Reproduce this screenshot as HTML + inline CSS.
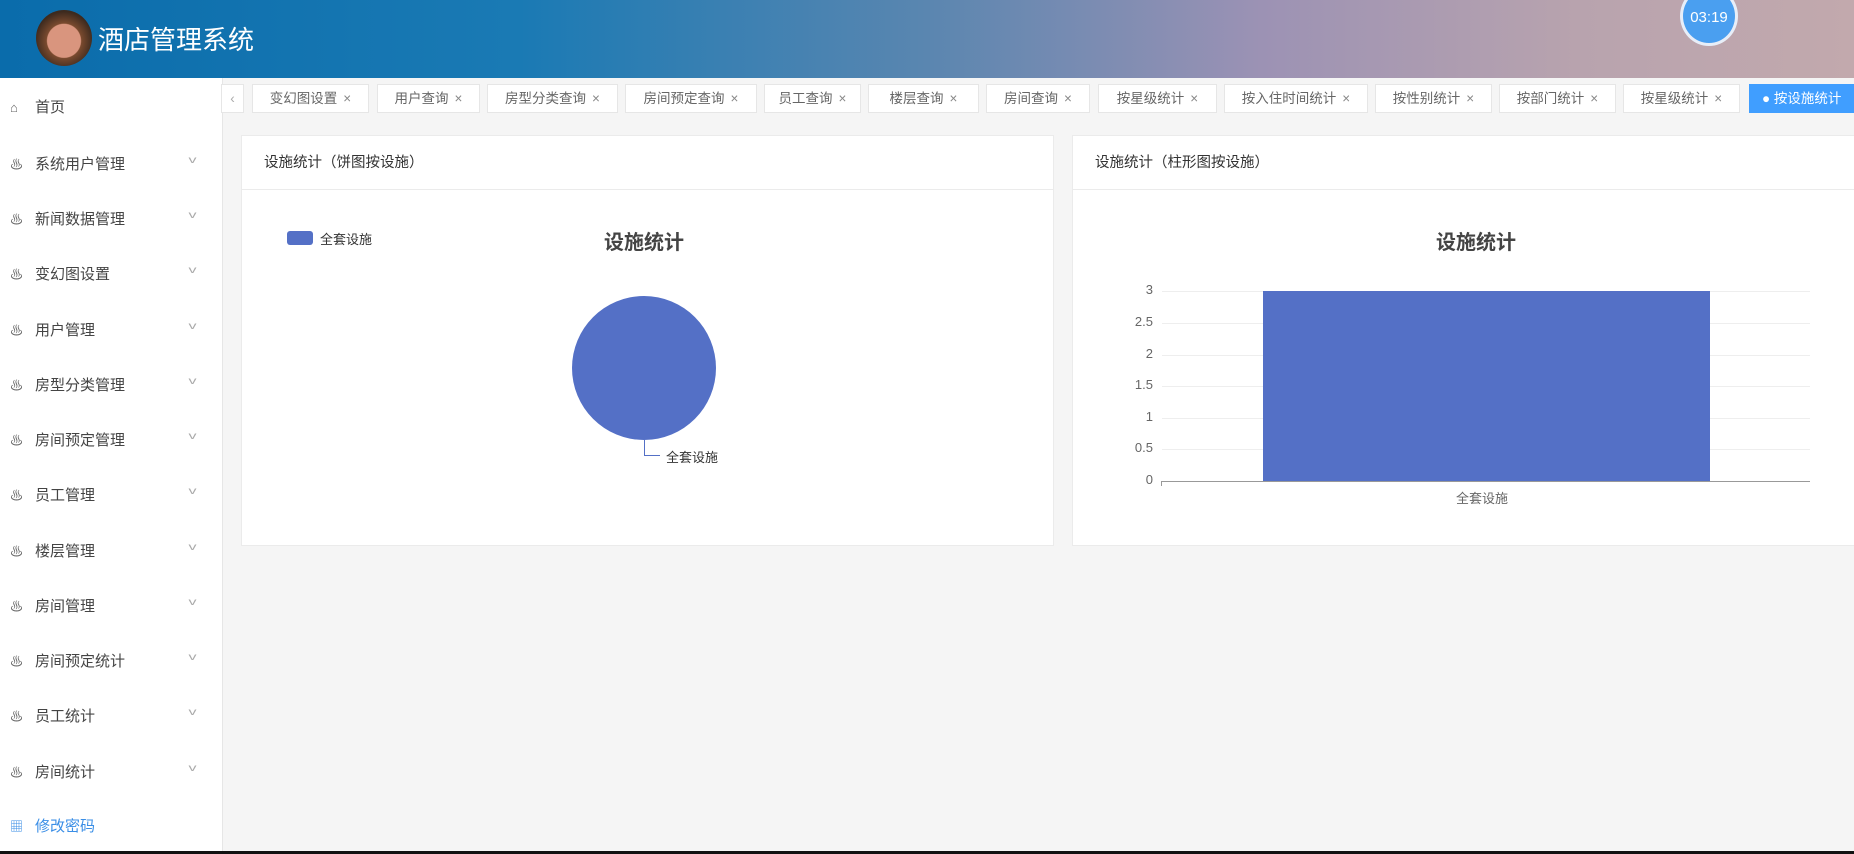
<!DOCTYPE html>
<html><head><meta charset="utf-8"><style>
*{margin:0;padding:0;box-sizing:border-box}
body{width:1854px;height:854px;overflow:hidden;background:#f5f5f5;font-family:"Liberation Sans","Noto Sans CJK SC",sans-serif;position:relative;color:#333}
.hdr{position:absolute;left:0;top:0;width:1854px;height:78px;background:linear-gradient(90deg,#0a6cab 0%,#1a7ab4 28%,#5a86b0 50%,#9c92b4 68%,#b8a3ae 85%,#c2a9ad 100%)}
.logo{position:absolute;left:36px;top:10px;width:56px;height:56px;border-radius:50%;background:radial-gradient(circle at 50% 55%,#d9957e 0 40%,#7a4a2e 42%,#3d2a1e 70%)}
.title{position:absolute;left:98px;top:20px;font-size:26px;color:#fff}
.clock{position:absolute;left:1680px;top:-14px;width:58px;height:60px;border-radius:50%;background:#4a9ff0;border:3px solid #e8eef8;color:#fff;font-size:15px;text-align:center;padding-top:20px}
.side{position:absolute;left:0;top:78px;width:223px;height:773px;background:#fff;border-right:1px solid #e6e6e6}
.mi{position:absolute;left:10px;font-size:15px;color:#444;height:20px;line-height:20px}
.mi i{display:inline-block;width:14px;font-style:normal;color:#666;margin-right:11px;font-size:13px}
.mi .ar{position:absolute;left:180px;top:-4px;color:#aaa;font-size:10px;transform:scaleX(1.6)}
.tab{position:absolute;top:84px;height:29px;background:#fff;border:1px solid #e6e6e6;font-size:13.5px;color:#666;line-height:27px;text-align:center;white-space:nowrap;overflow:hidden}
.tab b{font-weight:normal;color:#888;margin-left:6px}
.card{position:absolute;top:135px;height:411px;background:#fff;border:1px solid #ebebeb}
.ch{height:54px;border-bottom:1px solid #ebebeb;font-size:14.5px;line-height:54px;padding-left:22px;color:#333}
.ax{position:absolute;font-size:13px;color:#666;text-align:right;width:30px}
.gl{position:absolute;height:1px;background:#eee;left:1162px;width:648px}
</style></head><body>
<div class="hdr"><div class="logo"></div><div class="title">酒店管理系统</div><div class="clock">03:19</div></div>
<div class="side">
<div class="mi" style="top:20px"><i>⌂</i>首页</div>
<div class="mi" style="top:77px"><i>♨</i>系统用户管理<span class="ar">v</span></div>
<div class="mi" style="top:132px"><i>♨</i>新闻数据管理<span class="ar">v</span></div>
<div class="mi" style="top:187px"><i>♨</i>变幻图设置<span class="ar">v</span></div>
<div class="mi" style="top:243px"><i>♨</i>用户管理<span class="ar">v</span></div>
<div class="mi" style="top:298px"><i>♨</i>房型分类管理<span class="ar">v</span></div>
<div class="mi" style="top:353px"><i>♨</i>房间预定管理<span class="ar">v</span></div>
<div class="mi" style="top:408px"><i>♨</i>员工管理<span class="ar">v</span></div>
<div class="mi" style="top:464px"><i>♨</i>楼层管理<span class="ar">v</span></div>
<div class="mi" style="top:519px"><i>♨</i>房间管理<span class="ar">v</span></div>
<div class="mi" style="top:574px"><i>♨</i>房间预定统计<span class="ar">v</span></div>
<div class="mi" style="top:629px"><i>♨</i>员工统计<span class="ar">v</span></div>
<div class="mi" style="top:685px"><i>♨</i>房间统计<span class="ar">v</span></div>
<div class="mi" style="top:739px;color:#3a8ee6"><i style="color:#3a8ee6">▦</i>修改密码</div>
</div>
<div class="tab" style="left:221px;width:23px;color:#aaa">‹</div>
<div class="tab" style="left:252px;width:117px">变幻图设置<b>×</b></div>
<div class="tab" style="left:377px;width:103px">用户查询<b>×</b></div>
<div class="tab" style="left:487px;width:131px">房型分类查询<b>×</b></div>
<div class="tab" style="left:625px;width:132px">房间预定查询<b>×</b></div>
<div class="tab" style="left:764px;width:97px">员工查询<b>×</b></div>
<div class="tab" style="left:868px;width:111px">楼层查询<b>×</b></div>
<div class="tab" style="left:986px;width:104px">房间查询<b>×</b></div>
<div class="tab" style="left:1098px;width:119px">按星级统计<b>×</b></div>
<div class="tab" style="left:1224px;width:144px">按入住时间统计<b>×</b></div>
<div class="tab" style="left:1375px;width:117px">按性别统计<b>×</b></div>
<div class="tab" style="left:1499px;width:117px">按部门统计<b>×</b></div>
<div class="tab" style="left:1623px;width:117px">按星级统计<b>×</b></div>
<div class="tab" style="left:1749px;width:110px;background:#409eff;border-color:#409eff;color:#fff;text-align:left;padding-left:12px">● 按设施统计</div>
<div class="card" style="left:241px;width:813px"><div class="ch">设施统计（饼图按设施）</div></div>
<div class="card" style="left:1072px;width:800px"><div class="ch">设施统计（柱形图按设施）</div></div>
<div style="position:absolute;left:287px;top:231px;width:26px;height:14px;background:#5470c6;border-radius:3px"></div>
<div style="position:absolute;left:320px;top:229px;font-size:13px;color:#333">全套设施</div>
<div style="position:absolute;left:584px;top:226px;width:120px;text-align:center;font-size:20px;font-weight:bold;color:#444">设施统计</div>
<div style="position:absolute;left:572px;top:296px;width:144px;height:144px;border-radius:50%;background:#5470c6"></div>
<div style="position:absolute;left:644px;top:440px;width:1px;height:15px;background:#5470c6"></div>
<div style="position:absolute;left:644px;top:455px;width:16px;height:1px;background:#5470c6"></div>
<div style="position:absolute;left:666px;top:447px;font-size:13px;color:#333">全套设施</div>
<div style="position:absolute;left:1416px;top:226px;width:120px;text-align:center;font-size:20px;font-weight:bold;color:#444">设施统计</div>
<div class="gl" style="top:291px"></div><div class="gl" style="top:323px"></div><div class="gl" style="top:355px"></div><div class="gl" style="top:386px"></div><div class="gl" style="top:418px"></div><div class="gl" style="top:449px"></div>
<div class="ax" style="left:1123px;top:282px">3</div>
<div class="ax" style="left:1123px;top:314px">2.5</div>
<div class="ax" style="left:1123px;top:346px">2</div>
<div class="ax" style="left:1123px;top:377px">1.5</div>
<div class="ax" style="left:1123px;top:409px">1</div>
<div class="ax" style="left:1123px;top:440px">0.5</div>
<div class="ax" style="left:1123px;top:472px">0</div>
<div style="position:absolute;left:1263px;top:291px;width:447px;height:190px;background:#5470c6"></div>
<div style="position:absolute;left:1161px;top:481px;width:649px;height:1px;background:#999"></div>
<div style="position:absolute;left:1161px;top:481px;width:1px;height:5px;background:#999"></div>
<div style="position:absolute;left:1456px;top:488px;font-size:13px;color:#666">全套设施</div>
<div style="position:absolute;left:0;top:851px;width:1854px;height:3px;background:#111"></div>
</body></html>
